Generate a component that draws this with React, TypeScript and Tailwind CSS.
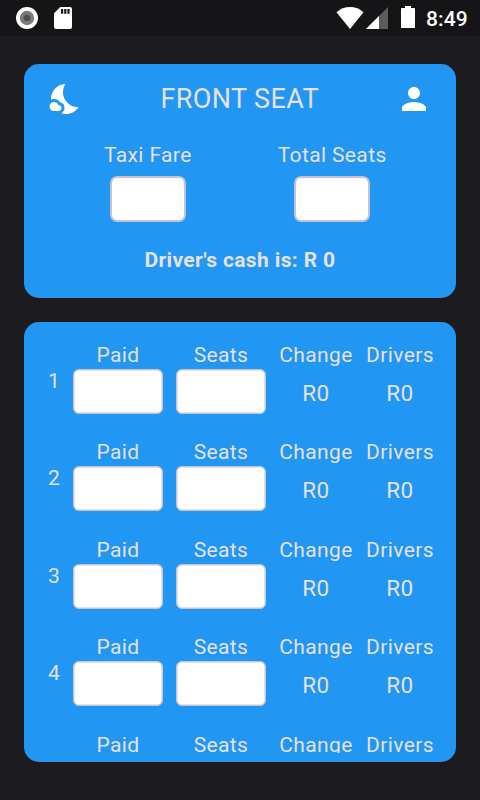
import { MdNightsStay, MdPerson } from "react-icons/md";

const rows = [1, 2, 3, 4, 5];

function StatusBar() {
  return (
    <header className="flex h-9 shrink-0 items-center bg-[#151517] pl-4 pr-3 text-white">
      <svg className="size-[22px]" viewBox="0 0 22 22">
        <circle cx="11" cy="11" r="11" fill="#fff" />
        <circle cx="11" cy="11" r="7.2" fill="#7b7b7c" />
        <circle cx="11" cy="11" r="3.3" fill="#4d4d4e" />
      </svg>
      <svg className="ml-4 h-[22px] w-[18px]" viewBox="0 0 18 22">
        <path
          fill="#fff"
          fillRule="evenodd"
          d="M6.3 0H16a2 2 0 0 1 2 2v18a2 2 0 0 1-2 2H2a2 2 0 0 1-2-2V6.3zM7 2v4.700h2.200V2zm3.200 0v4.700h2.200V2zm3.200 0v4.700h2.200V2z"
        />
      </svg>
      <svg className="ml-auto h-[22px] w-[28px]" viewBox="0 0 28 22">
        <path fill="#fff" d="M.5 5.2C4.3 1.9 9 0 14 0s9.700 1.900 13.500 5.200L14 22z" />
      </svg>
      <svg className="ml-0.5 size-[22px]" viewBox="0 0 22 22">
        <path fill="#5c5c5d" d="M22 0v22H0z" />
        <path fill="#fff" d="M13 9v13H0z" />
      </svg>
      <svg className="ml-[13px] mb-0.5 h-[22px] w-[14px]" viewBox="0 0 14 22">
        <path fill="#fff" d="M4 0h6v2h3.200q.8 0 .8.800V21.200q0 .8-.8.800H.8q-.8 0-.8-.8V2.800Q0 2 .8 2H4z" />
      </svg>
      <span className="ml-[11px] w-[42px] whitespace-nowrap pt-0.5 text-[21px] font-medium leading-6 tracking-[0.1px]">8:49</span>
    </header>
  );
}

function FareField({ label }: { label: string }) {
  return (
    <div className="flex flex-col items-center">
      <label className="h-6 whitespace-nowrap leading-6">{label}</label>
      <input className="mt-[9px] h-[46px] w-[76px] rounded-[7px] border-2 border-[#c6c0d2] bg-white" />
    </div>
  );
}

function PassengerField({ label }: { label: string }) {
  return (
    <div className="flex w-[90px] flex-col items-center">
      <label className="h-6 leading-6">{label}</label>
      <input className="mt-[2px] h-[45px] w-[90px] rounded-[6px] border border-[#cac4d0] bg-white shadow-[inset_0_0_0_0.5px_#cac4d0]" />
    </div>
  );
}

function Amount({ label }: { label: string }) {
  return (
    <div className="flex flex-col items-center whitespace-nowrap">
      <span className="h-6 leading-6">{label}</span>
      <span className="mt-[14px] text-[22.5px] leading-6">R0</span>
    </div>
  );
}

function PassengerRow({ seat }: { seat: number }) {
  return (
    <div className="flex h-[97.5px] shrink-0 items-start">
      <span className="w-[25px] pt-[26px] leading-6">{seat}</span>
      <PassengerField label="Paid" />
      <div className="ml-[13px]">
        <PassengerField label="Seats" />
      </div>
      <div className="ml-[13px] w-[74px]">
        <Amount label="Change" />
      </div>
      <div className="ml-[13px] w-[68px]">
        <Amount label="Drivers" />
      </div>
    </div>
  );
}

export default function App() {
  return (
    <div className="flex h-[800px] w-[480px] flex-col overflow-hidden bg-[#1c1b1f] font-[Roboto,sans-serif] text-[21px] tracking-[0.375px] text-[#e6e1e5]">
      <StatusBar />
      <main className="flex flex-col gap-6 px-6 pt-7">
        <section className="h-[234px] rounded-[15px] bg-[#2196f3] pt-[17px]">
          <div className="flex h-9 items-center justify-between pl-[23.500px] pr-6">
            <MdNightsStay className="size-9 text-white" />
            <h1 className="text-[27px] leading-9 tracking-[0.375px]">FRONT SEAT</h1>
            <MdPerson className="size-9 text-white" />
          </div>
          <div className="mt-[26px] flex gap-[86px] pl-20">
            <FareField label="Taxi Fare" />
            <FareField label="Total Seats" />
          </div>
          <p className="mt-[26px] text-center font-bold leading-6">Driver&apos;s cash is: R 0</p>
        </section>
        <section className="h-[440px] rounded-[15px] bg-[#2196f3] pl-6 pt-[20.900px]">
          <div className="flex h-[410px] flex-col overflow-hidden">
            {rows.map((seat) => (
              <PassengerRow key={seat} seat={seat} />
            ))}
          </div>
        </section>
      </main>
    </div>
  );
}
